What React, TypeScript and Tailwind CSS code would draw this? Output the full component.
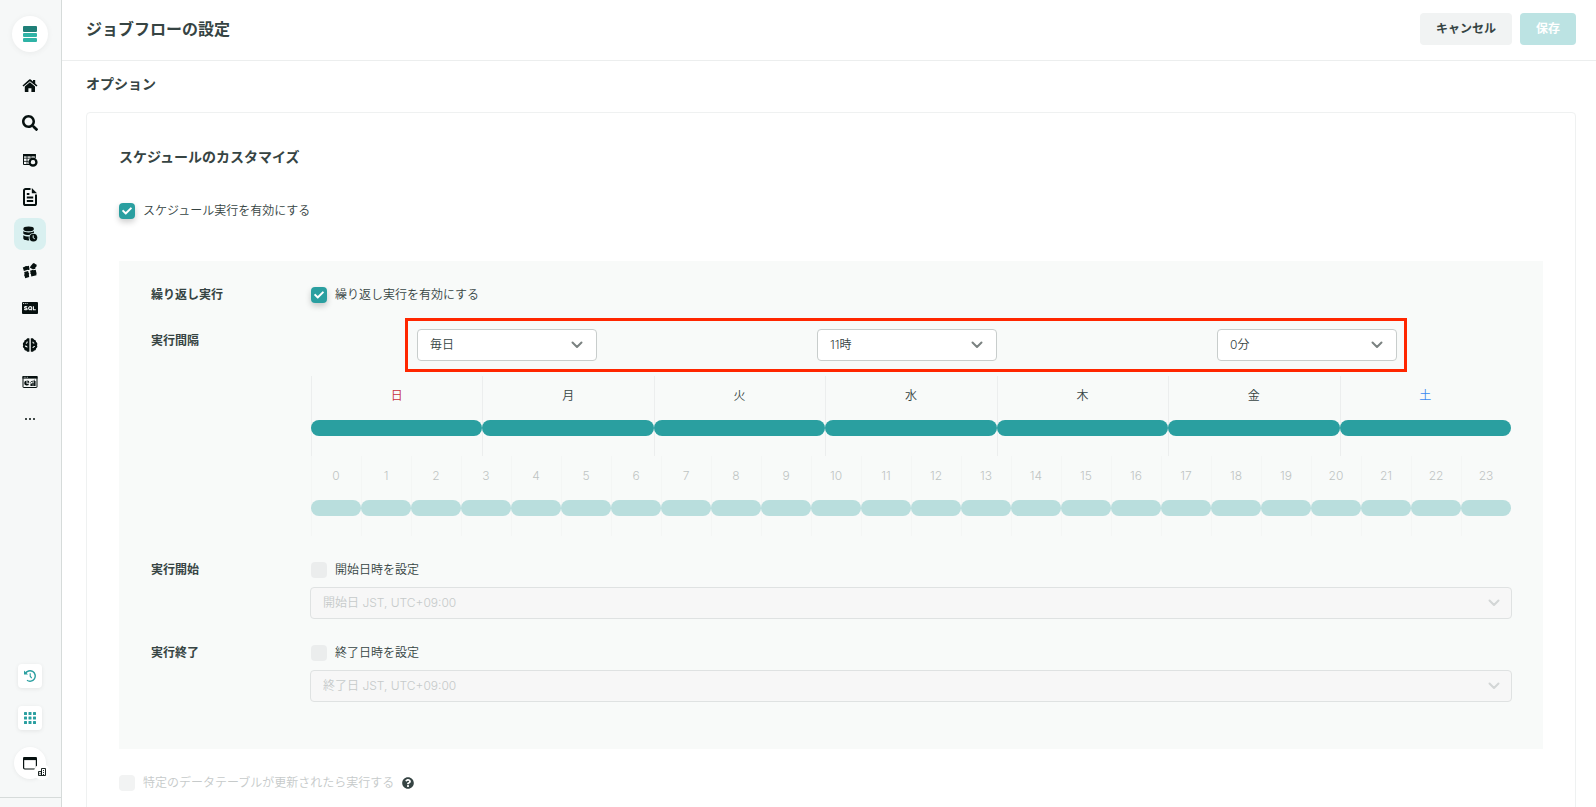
import React from 'react';
import { FaCheck, FaQuestionCircle, FaSearch } from 'react-icons/fa';

const days = [
  { label: '日', className: 'text-[#c62f3c]' },
  { label: '月', className: '' },
  { label: '火', className: '' },
  { label: '水', className: '' },
  { label: '木', className: '' },
  { label: '金', className: '' },
  { label: '土', className: 'text-[#3b8af0]' },
];

const hours = Array.from({ length: 24 }, (_, i) => i);

const HomeIcon = () => (
  <svg viewBox="0 0 16 14" className="w-4 h-[14px]" fill="currentColor">
    <path d="M7.9 3.2 2.8 7.500V12.400c0 .4.2.6.6.6h3V9.200h3V13h3c.4 0 .6-.2.6-.6V7.500z" />
    <path d="M15.500 6.400 13.200 4.400V1h-2.200v1.500L8.700.6a1.200 1.200 0 0 0-1.500 0L.5 6.400l1 1.200 6.400-5.400 6.500 5.400z" />
  </svg>
);

const TableCoinIcon = () => (
  <svg viewBox="0 0 16 14" className="w-4 h-[14px]" fill="none" stroke="currentColor">
    <path d="M8 11.500H1.500V1.500h11.800V5" />
    <path d="M1.500 5.200h7M1.500 8.400h5M5 3v8.500M9 3v2" strokeWidth=".8" />
    <path d="M1 2.200h12.800" strokeWidth="2.400" />
    <circle cx="11" cy="9.200" r="3.300" strokeWidth="2.600" />
    <circle cx="11" cy="9.200" r="2.100" fill="#f6f8f8" stroke="none" />
  </svg>
);

const DocumentIcon = () => (
  <svg viewBox="0 0 16 20" className="w-4 h-5" fill="none" stroke="currentColor" strokeWidth="2">
    <path d="M8.500 2H3.600A1.600 1.600 0 0 0 2 3.600V16.400A1.600 1.600 0 0 0 3.600 18H12.400A1.600 1.600 0 0 0 14 16.400V7.500" />
    <path d="M9.800 1v5.200H15z" fill="currentColor" stroke="none" />
    <path d="M4.800 7h2.600M4.800 10.500h6.400M4.800 14h6.400" strokeWidth="1.800" />
  </svg>
);

const DatabaseClockIcon = () => (
  <svg viewBox="0 0 16 16" className="w-4 h-4" fill="currentColor">
    <ellipse cx="6.600" cy="2.900" rx="5.300" ry="2.300" />
    <path d="M1.300 5c1 1 3 1.400 5.300 1.400s4.300-.4 5.300-1.400v2.100c-1.800-.1-3.400.6-4.400 1.900-2.500.1-5.200-.4-6.200-1.600z" />
    <path d="M1.300 9.200c1 .9 3 1.300 5.500 1.400-.3 1.300-.1 2.500.5 3.800-2.800.1-6-.5-6-2.200z" />
    <circle cx="11.400" cy="11.600" r="3.900" />
    <path d="M11.200 9.300v2.600l1.600.9" fill="none" stroke="#d9f0f0" />
  </svg>
);

const BlocksIcon = () => (
  <svg viewBox="0 0 16 16" className="w-4 h-4" fill="currentColor">
    <path d="m.8 4.400 1.900-.7c.4-.8 1.700-1 2.200-.5l2-.5.7 3.800c-.5.600-1.300.5-1.800.2L1.900 7.900z" />
    <path d="m9.800 1.800 1-1.300 1.200-.4 1.200.9 1.500.7-.2 1.700-1 .9-.2 1.400-2.100.5-1.900-.8-1.400-.8.8-1.500z" />
    <path d="m2.200 9 3.900-1.100.6 2.100c.6.300.6 1.200.1 1.600l.4 2.500-4 1.200-.6-2.300c-.7-.4-.6-1.400 0-1.700z" />
    <path d="m8 7.800 1.700-.5c.4-.7 1.300-.7 1.800-.1l2.200-.5.9 3.900c-.3.600-.3 1-.1 1.600l-5.200 1.300-.4-2.500c-.7-.2-.8-1.200-.3-1.500z" />
  </svg>
);

const SqlIcon = () => (
  <svg viewBox="0 0 16 14" className="w-4 h-[14px]">
    <rect y="1" width="16" height="12" rx="1" fill="currentColor" />
    <path d="M1 2.500h1m.8 0h1m.8 0h1" stroke="#f6f8f8" strokeWidth=".8" />
    <g fill="none" stroke="#f6f8f8" strokeWidth="1.100">
      <path d="M5.200 6c-.9-.6-2.700-.5-2.700.4 0 1.100 2.700.5 2.700 1.600 0 1-1.900 1-3 .3" />
      <circle cx="8.200" cy="7.200" r="1.600" />
      <path d="m8.400 7.800 1.500 1.400M11.400 5.200v3.500h2.400" />
    </g>
  </svg>
);

const BrainIcon = () => (
  <svg viewBox="0 0 16 16" className="w-4 h-4" fill="currentColor">
    <path d="M7.400 1.600v12.900c-1.500.6-2.800 0-3.200-1-1.200.1-2.200-.8-2-2.100C.9 10.800.5 9.300 1.200 8.200.5 7 .9 5.600 2.200 5c-.1-1.300.8-2.200 1.900-2.200.3-1.200 1.900-1.900 3.300-1.200z" />
    <path d="M8.800 1.600v12.900c1.500.6 2.800 0 3.200-1 1.200.1 2.200-.8 2-2.100 1.300-.6 1.700-2.100 1-3.200.7-1.200.3-2.600-1-3.200.1-1.300-.8-2.200-1.900-2.200-.3-1.200-1.900-1.900-3.300-1.200z" />
    <path d="M5.300 4.500c0 1.100-.5 1.700-1.400 2M3 9.200c1.100-.2 1.900.2 2.300 1.200M10.800 4.800c.1.900.6 1.400 1.500 1.500M12.900 9.500c-1.100-.1-1.800.4-2 1.500" fill="none" stroke="#f6f8f8" strokeWidth="1.100" />
  </svg>
);

const DashboardIcon = () => (
  <svg viewBox="0 0 16 14" className="w-4 h-[14px]" fill="none" stroke="currentColor">
    <rect x="1" y="1.500" width="14" height="11" rx=".5" />
    <path d="M.5 2.300h15" strokeWidth="2.600" />
    <path d="M1.800 2.300h.9m.7 0h.9m.7 0h.9" stroke="#f6f8f8" strokeWidth=".7" />
    <path d="M4.500 5.600a2.500 2.500 0 1 0 2.600 3.100H4.500z" fill="currentColor" stroke="none" />
    <path d="M5.400 5.300a2.600 2.600 0 0 1 2 2.400h-2z" fill="currentColor" stroke="none" />
    <path d="M9.200 11V8.500M11 11V7.500M12.800 11V6" strokeWidth="1.500" />
    <path d="m8.300 7.500 1.700-1.400 1 .4 2-1.700" strokeWidth=".8" />
  </svg>
);

const DotsIcon = () => (
  <svg viewBox="0 0 16 4" className="w-4 h-1" fill="currentColor">
    <circle cx="4" cy="2" r="1" />
    <circle cx="8" cy="2" r="1" />
    <circle cx="12" cy="2" r="1" />
  </svg>
);

const navItems = [
  { label: 'ホーム', icon: <HomeIcon /> },
  { label: '検索', icon: <FaSearch className="w-4 h-4" /> },
  { label: 'データカタログ', icon: <TableCoinIcon /> },
  { label: 'ドキュメント', icon: <DocumentIcon /> },
  { label: 'ジョブフロー', icon: <DatabaseClockIcon />, active: true },
  { label: 'アプリ', icon: <BlocksIcon /> },
  { label: 'クエリ', icon: <SqlIcon /> },
  { label: 'モデル', icon: <BrainIcon /> },
  { label: 'ダッシュボード', icon: <DashboardIcon /> },
  { label: 'その他', icon: <DotsIcon /> },
];

const Sidebar = () => (
  <aside className="flex w-[62px] shrink-0 flex-col border-r border-[#d6dbda] bg-[#f6f8f8] pt-4 text-[#06100f]">
    <div className="flex w-[60px] flex-1 flex-col items-center">
      <a href="#" aria-label="トップ" className="flex h-9 w-9 items-center justify-center rounded-full bg-white shadow-[0_1px_6px_rgba(0,0,0,0.06)]">
        <svg viewBox="0 0 14 16" className="h-4 w-[14px]">
          <rect width="14" height="6" rx="1" fill="#1f7f78" />
          <rect y="7" width="14" height="4" rx="1" fill="#2fb3a6" />
          <rect y="12" width="14" height="4" rx="1" fill="#2fb3a6" />
        </svg>
      </a>
      <nav className="mt-[18px] flex flex-col gap-[5px]">
        {navItems.map((item) => (
          <a
            key={item.label}
            href="#"
            aria-label={item.label}
            className={`flex h-8 w-8 items-center justify-center rounded-lg ${item.active ? 'bg-[#d9f0f0]' : ''}`}
          >
            {item.icon}
          </a>
        ))}
      </nav>
      <div className="mt-auto flex flex-col items-center">
        <button aria-label="履歴" className="flex h-6 w-6 items-center justify-center rounded bg-white text-[#2a9fa0] shadow-[0_1px_4px_rgba(0,0,0,0.08)]">
          <svg viewBox="0 0 12 12" className="h-3 w-3" fill="none" stroke="currentColor" strokeWidth="1.400">
            <path d="M1.400 3.600A5.200 5.200 0 1 1 3 10.200" />
            <path d="M0 .4v4h4z" fill="currentColor" stroke="none" />
            <path d="M6.200 3.200v3l1.500 1.900" strokeWidth="1.100" />
          </svg>
        </button>
        <button aria-label="アプリ一覧" className="mt-[18px] flex h-6 w-6 items-center justify-center rounded bg-white text-[#2a9fa0] shadow-[0_1px_4px_rgba(0,0,0,0.08)]">
          <svg viewBox="0 0 12 12" className="h-3 w-3" fill="currentColor">
            {[0, 4.5, 9].map((y) => [0, 4.5, 9].map((x) => <rect key={`${x}-${y}`} x={x} y={y} width="3" height="3" rx=".5" />))}
          </svg>
        </button>
        <button aria-label="ワークスペース" className="relative mt-[17px] flex h-8 w-8 items-center justify-center rounded-full bg-white shadow-[0_1px_4px_rgba(0,0,0,0.06)]">
          <svg viewBox="0 0 14 14" className="h-[14px] w-[14px]" fill="none" stroke="currentColor">
            <rect x=".6" y="1.600" width="12.800" height="11.400" rx="1.200" strokeWidth="1.200" />
            <path d="M.4 2.600h13.200" strokeWidth="3" />
          </svg>
          <span className="absolute -bottom-px -right-1 flex h-4 w-4 items-center justify-center rounded-full bg-white">
            <svg viewBox="0 0 8 8" className="h-2 w-2" fill="none" stroke="currentColor" strokeWidth=".9">
              <path d="M.5 7.500v-4h3v4zM3.500 7.500V.5h4v7z" />
              <path d="M5.500 2v1M5.500 4v1M5.500 6v1M2 4.800v1.500" />
            </svg>
          </span>
        </button>
      </div>
    </div>
    <div className="mt-[18px] h-[10px] border-t border-[#d6dbda]" />
  </aside>
);

interface CheckboxProps {
  label: string;
  defaultChecked?: boolean;
  disabled?: boolean;
}

const Checkbox: React.FC<CheckboxProps> = ({ label, defaultChecked, disabled }) => (
  <label className={`flex h-6 items-center gap-2 ${disabled ? 'text-[#c6caca]' : ''}`}>
    <span className="relative flex h-4 w-4">
      <input
        type="checkbox"
        defaultChecked={defaultChecked}
        disabled={disabled}
        className="peer h-4 w-4 appearance-none rounded bg-[#ebeded] checked:bg-[#2a9fa0] checked:shadow-[0_3px_6px_rgba(0,0,0,0.2)] disabled:bg-[#f2f3f3]"
      />
      <FaCheck className="pointer-events-none absolute left-[3px] top-[3px] hidden h-[10px] w-[10px] text-white peer-checked:block" />
    </span>
    {label}
  </label>
);

interface SelectProps {
  label: string;
  value: string;
  disabled?: boolean;
  className?: string;
}

const Select: React.FC<SelectProps> = ({ label, value, disabled, className }) => (
  <div className={`relative ${className ?? ''}`}>
    <select
      aria-label={label}
      disabled={disabled}
      className="h-8 w-full appearance-none rounded border border-[#c8cdcc] bg-white px-3 disabled:border-[#dfe2e2] disabled:bg-[#f7f7f7] disabled:text-[#c6caca] disabled:opacity-100"
    >
      <option>{value}</option>
    </select>
    <svg
      viewBox="0 0 12 8"
      className={`pointer-events-none absolute top-3 h-2 w-3 ${disabled ? 'right-3 text-[#d3d6d6]' : 'right-[14px] text-[#7b8281]'}`}
      fill="none"
      stroke="currentColor"
      strokeWidth="2"
      strokeLinecap="round"
      strokeLinejoin="round"
    >
      <path d="m1.500 1.500 4.500 4.500 4.500-4.500" />
    </svg>
  </div>
);

const Row = ({ label, children }: { label: string; children: React.ReactNode }) => (
  <div className="flex">
    <div className="w-40 shrink-0 font-bold leading-6">{label}</div>
    <div className="min-w-0 flex-1">{children}</div>
  </div>
);

export default function App() {
  return (
    <div className="flex h-screen overflow-hidden bg-white font-['Inter','Noto_Sans_CJK_JP',sans-serif] text-xs font-[350] text-[#364443]">
      <Sidebar />
      <main className="flex min-w-0 flex-1 flex-col">
        <header className="flex h-[61px] shrink-0 items-center justify-between border-b border-[#eceeee] pb-0.5 pl-6 pr-5">
          <h1 className="text-base font-bold">ジョブフローの設定</h1>
          <div className="flex gap-2">
            <button className="h-8 rounded bg-[#f1f3f3] px-4 font-bold">キャンセル</button>
            <button disabled className="h-8 rounded bg-[#bce3e3] px-4 font-bold text-white">保存</button>
          </div>
        </header>

        <div className="min-h-0 flex-1 overflow-hidden pl-6 pr-5 pt-[11px]">
          <h2 className="text-sm font-bold leading-6">オプション</h2>

          <section className="mt-4 rounded border border-[#eff1f1] p-8">
            <h3 className="text-sm font-bold leading-6">スケジュールのカスタマイズ</h3>
            <div className="mt-[30px]">
              <Checkbox label="スケジュール実行を有効にする" defaultChecked />
            </div>

            <div className="mt-[38px] flex flex-col gap-[22px] bg-[#f8faf9] px-8 pb-[47px] pt-[22px]">
              <Row label="繰り返し実行">
                <Checkbox label="繰り返し実行を有効にする" defaultChecked />
              </Row>

              <Row label="実行間隔">
                <div className="relative flex justify-around">
                  <Select label="間隔" value="毎日" className="mr-2 w-[180px]" />
                  <Select label="時" value="11時" className="mr-2 w-[180px]" />
                  <Select label="分" value="0分" className="mr-2 w-[180px]" />
                  {/* 時刻指定の強調枠 */}
                  <div className="pointer-events-none absolute -inset-y-[11px] left-[94px] right-[104px] border-[3px] border-[#ff2600]" />
                </div>
                <div className="mt-[15px] grid grid-cols-7">
                  {days.map((day) => (
                    <div key={day.label} className="h-20 bg-[linear-gradient(#eceeee,#eceeee)] bg-[length:1px_100%] bg-no-repeat">
                      <div className={`text-center leading-10 ${day.className}`}>{day.label}</div>
                      <div className="mt-1 h-4 rounded-full bg-[#2a9fa0]" />
                    </div>
                  ))}
                </div>
                <div className="grid grid-cols-24 opacity-30">
                  {hours.map((hour) => (
                    <div key={hour} className="h-20 bg-[linear-gradient(#eceeee,#eceeee)] bg-[length:1px_100%] bg-no-repeat">
                      <div className="text-center leading-10">{hour}</div>
                      <div className="mt-1 h-4 rounded-full bg-[#2a9fa0]" />
                    </div>
                  ))}
                </div>
              </Row>

              <Row label="実行開始">
                <Checkbox label="開始日時を設定" />
                <Select label="開始日" value="開始日 JST, UTC+09:00" disabled className="-mx-px mt-[5px]" />
              </Row>

              <Row label="実行終了">
                <Checkbox label="終了日時を設定" />
                <Select label="終了日" value="終了日 JST, UTC+09:00" disabled className="-mx-px mt-[5px]" />
              </Row>
            </div>

            <div className="mt-[22px] flex items-center gap-2">
              <Checkbox label="特定のデータテーブルが更新されたら実行する" disabled />
              <FaQuestionCircle className="h-3 w-3" />
            </div>
          </section>
        </div>
      </main>
    </div>
  );
}
